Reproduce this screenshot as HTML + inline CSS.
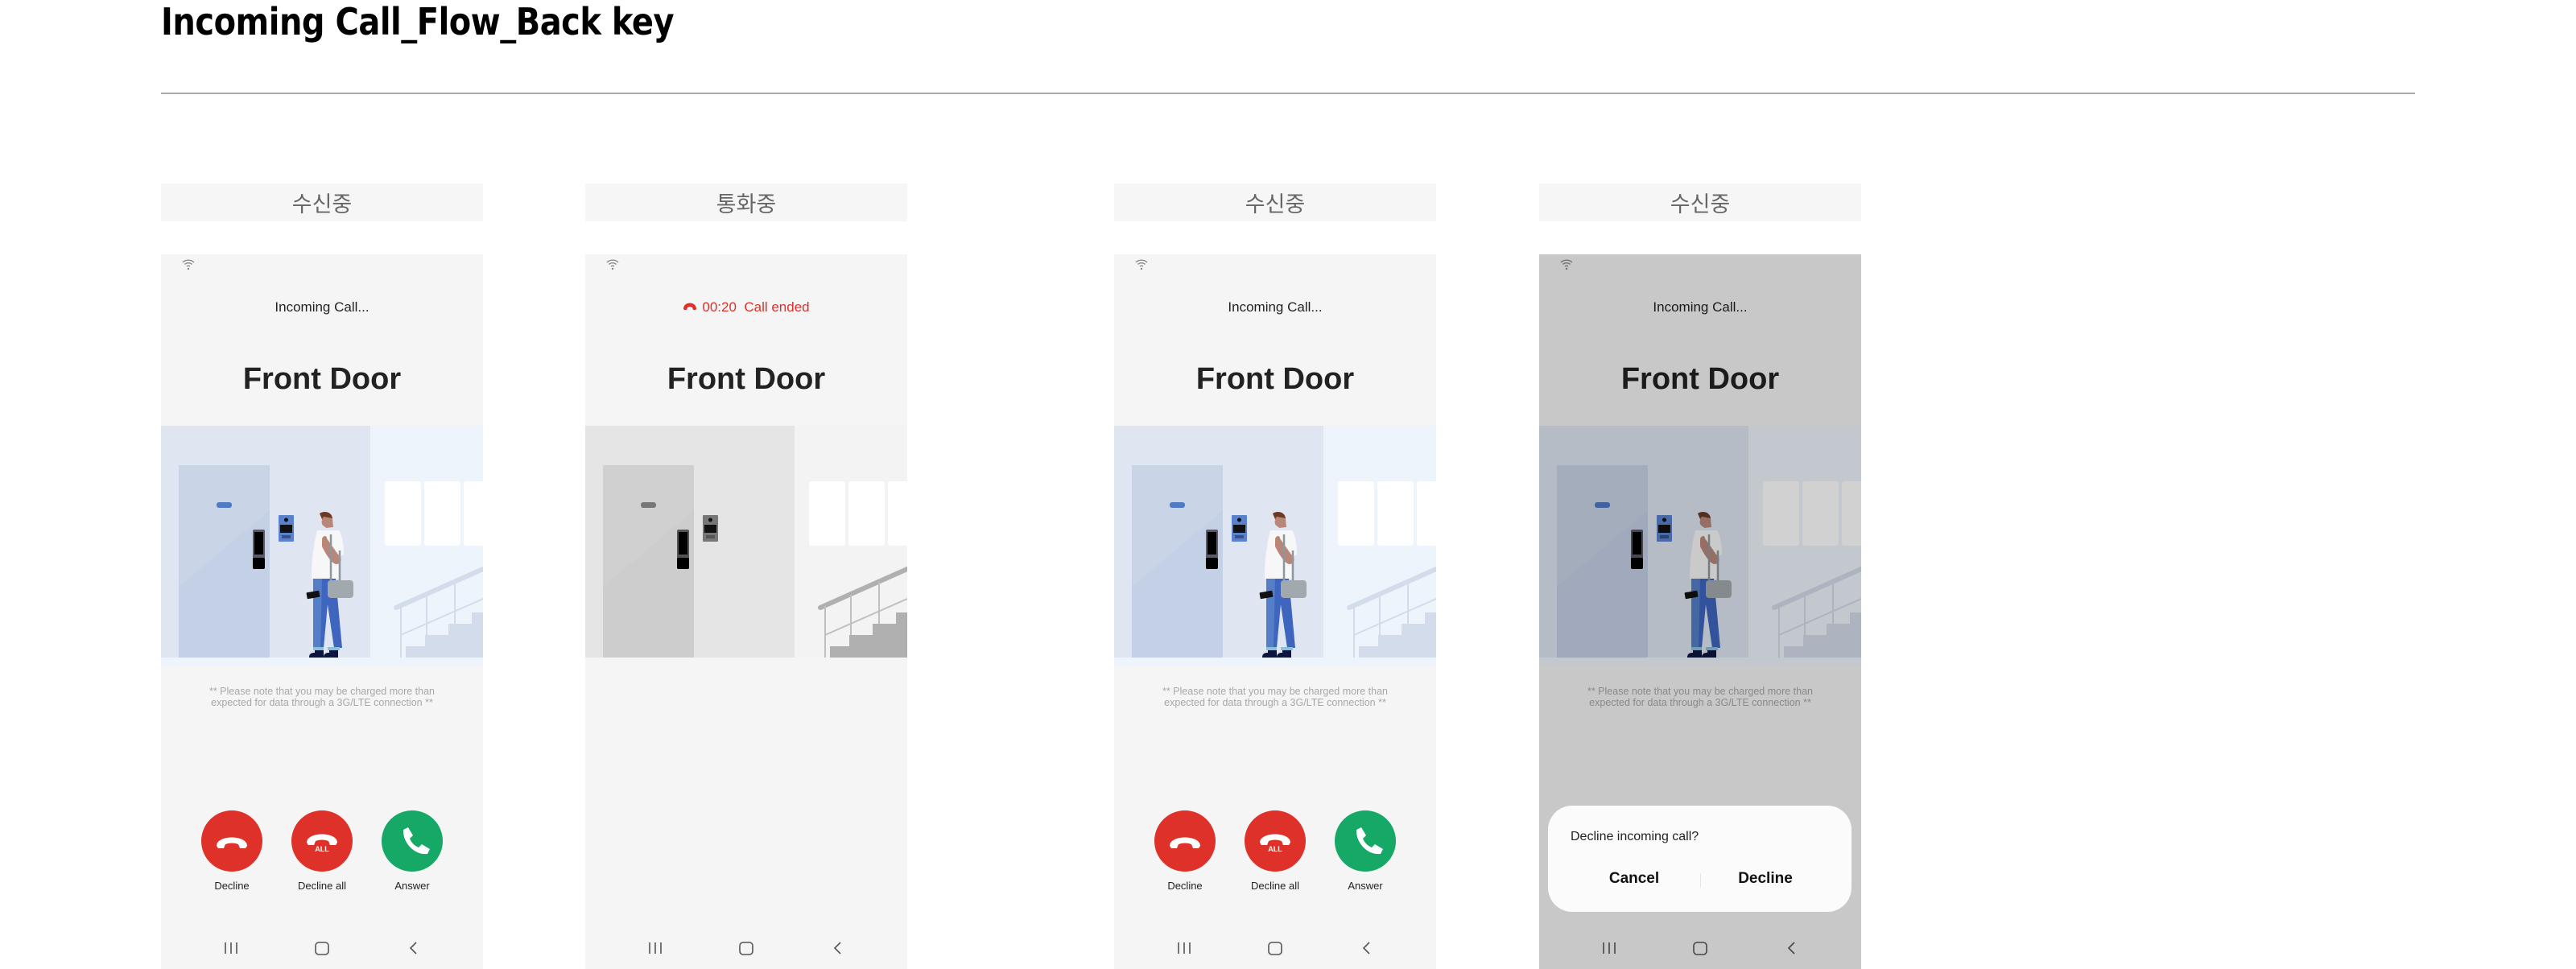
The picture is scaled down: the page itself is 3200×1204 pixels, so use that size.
<!DOCTYPE html>
<html><head><meta charset="utf-8"><style>
*{margin:0;padding:0;box-sizing:border-box}
body{width:3200px;height:1204px;background:#fff;position:relative;overflow:hidden;font-family:"Liberation Sans","Noto Sans CJK KR",sans-serif}
.title{position:absolute;left:200px;top:0;font-size:46px;font-family:"DejaVu Sans Condensed","Liberation Sans",sans-serif;font-weight:600;color:#000;letter-spacing:-0.5px;transform:scaleX(0.966);transform-origin:left top;white-space:nowrap}
.rule{position:absolute;left:200px;top:115px;width:2800px;height:2px;background:#aaa}
.lab{position:absolute;top:228px;width:400px;height:47px;background:#f6f6f6;color:#666;font-size:27px;text-align:center;line-height:47px;font-family:"Noto Sans CJK KR",sans-serif}
.ph{position:absolute;top:316px;width:400px;height:888px;background:#f5f5f5;overflow:hidden}
.wifi{position:absolute;left:26px;top:6px}
.st{position:absolute;left:0;width:400px;top:56px;text-align:center;font-size:17px;color:#222}
.name{position:absolute;left:0;width:400px;top:134px;text-align:center;font-size:38px;font-weight:bold;color:#222}
.ill{position:absolute;left:0;top:213px}
.note{position:absolute;left:0;width:400px;top:536px;text-align:center;font-size:12.5px;line-height:14px;color:#a8a8a8}
.btn{position:absolute;top:691px;width:76px;height:76px;border-radius:50%}
.bl{position:absolute;top:777px;width:120px;text-align:center;font-size:13px;color:#222}
.nav{position:absolute;top:850px;left:0;width:400px;height:24px}
.ov{position:absolute;left:0;top:0;width:400px;height:888px;background:rgba(0,0,0,0.18)}
.dlg{position:absolute;left:11px;top:685px;width:377px;height:132px;background:#fbfbfb;border-radius:30px}
</style></head><body>
<div class="title">Incoming Call_Flow_Back key</div>
<div class="rule"></div>
<div class="lab" style="left:200px">수신중</div>
<div class="lab" style="left:727px">통화중</div>
<div class="lab" style="left:1384px">수신중</div>
<div class="lab" style="left:1912px">수신중</div>

<div class="ph" style="left:200px">
<svg class="wifi" width="16" height="14" viewBox="0 0 16 14"><path d="M1 4a10 10 0 0 1 14 0M3.5 6.5a6.5 6.5 0 0 1 9 0M6 9a3 3 0 0 1 4 0" fill="none" stroke="#888" stroke-width="1.4"/><circle cx="8" cy="12" r="1.2" fill="#888"/></svg>
<div class="st">Incoming Call...</div>
<div class="name">Front Door</div>
<svg class="ill" width="400" height="298" viewBox="0 0 400 298">
<rect width="400" height="298" fill="#eef4fc"/>
<rect width="260" height="288" fill="#dfe6f2"/>
<rect x="22" y="49" width="113" height="239" fill="#c4d0e6"/>
<polygon points="22,200 135,105 135,49 22,49" fill="#c9d4e6"/>
<rect x="69" y="95" width="19" height="7" rx="3" fill="#5079c6"/>
<rect x="114" y="129" width="15" height="49" rx="2" fill="#5a5a6a"/><rect x="116" y="132" width="11" height="28" fill="#000"/><rect x="114" y="164" width="15" height="14" rx="2" fill="#000"/>
<rect x="146" y="111" width="19" height="33" rx="1" fill="#5a82cc"/><circle cx="155.5" cy="117" r="2.5" fill="#111"/><rect x="148" y="123" width="15" height="10" fill="#111"/><rect x="150" y="136" width="11" height="4" fill="#33528e"/>
<rect x="278" y="69" width="45" height="80" rx="3" fill="#fff"/><rect x="327" y="69" width="45" height="80" rx="3" fill="#fff"/><rect x="376" y="69" width="30" height="80" rx="3" fill="#fff"/>
<path d="M292 226 L400 178" stroke="#d3dcea" stroke-width="6" stroke-linecap="round"/>
<path d="M298 224V288M330 210V288M365 194V288M298 260L400 215" stroke="#d3dcea" stroke-width="2"/>
<path d="M304 288V274H328V260H357V246H386V232H400V288Z" fill="#d3dcea"/>
<path d="M197 109c6-4 15-2 16 6l-2 8-8 0z" fill="#6b3b22"/>
<path d="M203 113c-3 0-4 6-3 9 1 3 4 3 5 5l9-1-1-11z" fill="#b8877a"/>
<path d="M194 130h27c5 8 6 20 6 30l-4 2v28h-36c0-20 2-40 7-60z" fill="#f7f7f7"/>
<path d="M200 140c2-4 6-4 6 0l14 20c6 4 4 12-2 12-6 0-14-14-18-22z" fill="#b8877a"/>
<path d="M189 190h28l8 86h-10l-8-54-5 54h-13z" fill="#3e66be"/>
<path d="M189 190h11l-2 86h-9z" fill="#557ec8"/>
<rect x="189" y="275" width="13" height="4" fill="#88c0e0"/><rect x="207" y="275" width="15" height="4" fill="#88c0e0"/>
<path d="M191 279h11v9h-18c0-5 3-6 7-6z" fill="#0c1540"/><path d="M209 279h11v9h-18c0-5 3-6 7-6z" fill="#0c1540"/>
<path d="M211 135v58M222 155v38" stroke="#8e979e" stroke-width="2.5"/>
<rect x="207" y="192" width="32" height="22" rx="4" fill="#a2a9ae"/>
<rect x="181" y="206" width="16" height="8" rx="1" transform="rotate(-10 189 210)" fill="#111"/>
<rect y="288" width="400" height="10" fill="#eef4fc"/>
</svg>
<div class="note">** Please note that you may be charged more than<br>expected for data through a 3G/LTE connection **</div>
<div class="btn" style="left:50px;background:#dd3129"><svg width="76" height="76" viewBox="0 0 76 76"><path d="M19 44c0-14 38-14 38 0l-2 3h-7l-2-5c-5-2-11-2-16 0l-2 5h-7z" fill="#fff"/></svg></div>
<div class="btn" style="left:162px;background:#dd3129"><svg width="76" height="76" viewBox="0 0 76 76"><path d="M19 40c0-14 38-14 38 0l-2 3h-7l-2-5c-5-2-11-2-16 0l-2 5h-7z" fill="#fff"/><text x="38" y="51" text-anchor="middle" font-size="9" font-weight="bold" fill="#fff" font-family="Liberation Sans">ALL</text></svg></div>
<div class="btn" style="left:274px;background:#15a867"><svg width="76" height="76" viewBox="0 0 76 76"><path d="M27 24l6-3 6 10-4 4c2 5 6 9 11 11l4-4 10 6-3 6c-16 2-31-14-30-30z" fill="#fff"/></svg></div>
<div class="bl" style="left:28px">Decline</div><div class="bl" style="left:140px">Decline all</div><div class="bl" style="left:252px">Answer</div>
<svg class="nav" viewBox="0 0 400 24"><path d="M80 5v14M87 5v14M94 5v14" stroke="#555" stroke-width="1.6"/><rect x="192" y="5" width="16" height="15" rx="4" fill="none" stroke="#555" stroke-width="1.6"/><path d="M317 5l-7 7 7 7" fill="none" stroke="#555" stroke-width="1.6"/></svg>
</div>

<div class="ph" style="left:727px">
<svg class="wifi" width="16" height="14" viewBox="0 0 16 14"><path d="M1 4a10 10 0 0 1 14 0M3.5 6.5a6.5 6.5 0 0 1 9 0M6 9a3 3 0 0 1 4 0" fill="none" stroke="#888" stroke-width="1.4"/><circle cx="8" cy="12" r="1.2" fill="#888"/></svg>
<div class="st" style="color:#dd3129"><svg width="18" height="10" viewBox="0 0 18 10" style="vertical-align:1px;margin-right:6px"><path d="M1 8c0-10 16-10 16 0l-1 1h-3l-1-3c-2-1-4-1-6 0l-1 3H2z" fill="#dd3129"/></svg>00:20&nbsp; Call ended</div>
<div class="name">Front Door</div>
<svg class="ill" width="400" height="298" viewBox="0 0 400 298">
<rect width="400" height="298" fill="#f3f3f3"/>
<rect width="260" height="288" fill="#e5e5e5"/>
<rect x="22" y="49" width="113" height="239" fill="#cdcdcd"/>
<polygon points="22,200 135,105 135,49 22,49" fill="#d0d0d0"/>
<rect x="69" y="95" width="19" height="7" rx="3" fill="#777"/>
<rect x="114" y="129" width="15" height="49" rx="2" fill="#555"/><rect x="116" y="132" width="11" height="28" fill="#000"/><rect x="114" y="164" width="15" height="14" rx="2" fill="#000"/>
<rect x="146" y="111" width="19" height="33" rx="1" fill="#777"/><circle cx="155.5" cy="117" r="2.5" fill="#111"/><rect x="148" y="123" width="15" height="10" fill="#111"/><rect x="150" y="136" width="11" height="4" fill="#555"/>
<rect x="278" y="69" width="45" height="80" rx="3" fill="#fff"/><rect x="327" y="69" width="45" height="80" rx="3" fill="#fff"/><rect x="376" y="69" width="30" height="80" rx="3" fill="#fff"/>
<path d="M292 226 L400 178" stroke="#b0b0b0" stroke-width="6" stroke-linecap="round"/>
<path d="M298 224V288M330 210V288M365 194V288M298 260L400 215" stroke="#c0c0c0" stroke-width="2"/>
<path d="M304 288V274H328V260H357V246H386V232H400V288Z" fill="#b0b0b0"/>
<rect y="288" width="400" height="10" fill="#f5f5f5"/>
</svg>
<svg class="nav" viewBox="0 0 400 24"><path d="M80 5v14M87 5v14M94 5v14" stroke="#555" stroke-width="1.6"/><rect x="192" y="5" width="16" height="15" rx="4" fill="none" stroke="#555" stroke-width="1.6"/><path d="M317 5l-7 7 7 7" fill="none" stroke="#555" stroke-width="1.6"/></svg>
</div>

<div class="ph" style="left:1384px" id="p3"></div>
<div class="ph" style="left:1912px" id="p4"></div>
<script>
var src=document.querySelector('.ph').innerHTML;
document.getElementById('p3').innerHTML=src;
document.getElementById('p4').innerHTML=src+'<div class="ov"></div><div class="dlg"><div style="position:absolute;left:28px;top:30px;font-size:16px;color:#222">Decline incoming call?</div><div style="position:absolute;left:27px;width:160px;top:80px;text-align:center;font-size:19px;font-weight:bold;color:#111">Cancel</div><div style="position:absolute;left:189px;top:84px;width:1px;height:18px;background:#e6e6e6"></div><div style="position:absolute;left:190px;width:160px;top:80px;text-align:center;font-size:19px;font-weight:bold;color:#111">Decline</div></div>';
</script>
</body></html>
